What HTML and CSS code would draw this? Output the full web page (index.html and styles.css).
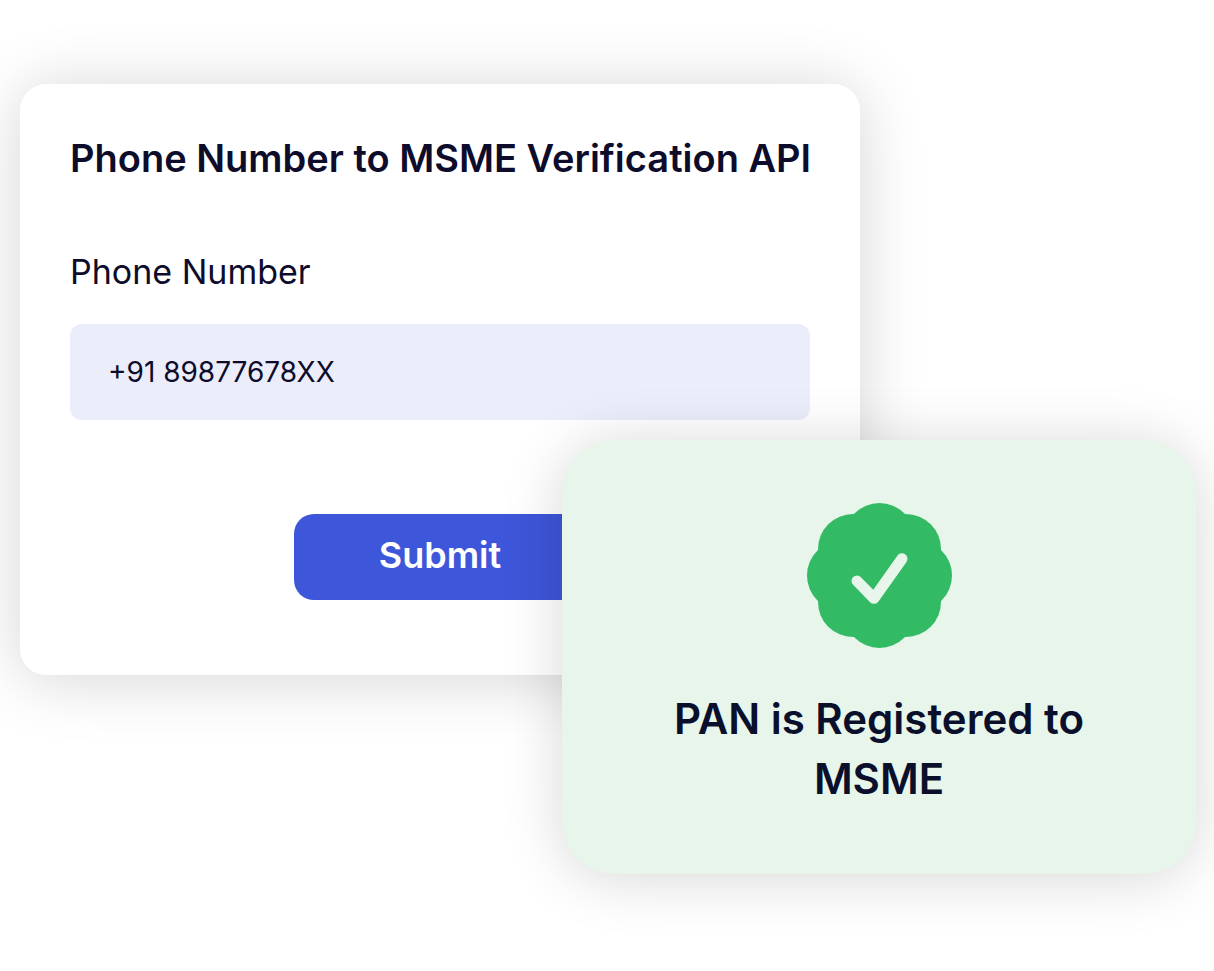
FILE: index.html
```html
<!DOCTYPE html>
<html lang="en">
<head>
<meta charset="utf-8">
<meta name="viewport" content="width=device-width, initial-scale=1">
<title>Phone Number to MSME Verification API</title>
<link rel="stylesheet" href="styles.css">
</head>
<body>
<main class="stage">
  <form class="form-card">
    <h1 class="form-title">Phone Number to MSME Verification API</h1>
    <label class="form-label" for="phone">Phone Number</label>
    <input class="form-input" id="phone" type="tel" value="+91 89877678XX">
    <button class="form-submit" type="button">Submit</button>
  </form>
  <section class="result-card">
    <svg class="badge" viewBox="0 0 145 145" aria-hidden="true">
      <g class="badge-shape">
        <circle cx="72.5" cy="72.5" r="50"/>
        <circle cx="72.5" cy="35" r="35"/>
        <circle cx="99" cy="46" r="35"/>
        <circle cx="110" cy="72.5" r="35"/>
        <circle cx="99" cy="99" r="35"/>
        <circle cx="72.5" cy="110" r="35"/>
        <circle cx="46" cy="99" r="35"/>
        <circle cx="35" cy="72.5" r="35"/>
        <circle cx="46" cy="46" r="35"/>
      </g>
      <path class="badge-tick" d="M50 78 67 95.3 95 55.7"/>
    </svg>
    <p class="result-text">PAN is Registered to MSME</p>
  </section>
</main>
</body>
</html>
```
FILE: styles.css
```css
* {
  box-sizing: border-box;
}

body {
  margin: 0;
  background: #fff;
  color: #0d0c2b;
  font-family: Inter, "Liberation Sans", sans-serif;
  overflow-x: hidden;
}

/* The two cards share one row and overlap in the middle column. */
.stage {
  display: grid;
  grid-template-columns: 542fr 298fr 336fr;
  align-items: start;
  padding: 84px 18px 96px 20px;
}

.form-card {
  grid-area: 1 / 1 / 2 / 3;
  display: flex;
  flex-direction: column;
  padding: 50px 50px 75px;
  border-radius: 26px;
  background: #fff;
  box-shadow: 0 4px 64px rgba(0, 0, 0, 0.17);
}

.form-title {
  margin: 0;
  font-size: 38px;
  font-weight: 600;
  line-height: 48px;
  text-align: center;
  white-space: nowrap;
}

.form-label {
  margin-top: 68px;
  font-size: 34px;
  line-height: 44px;
}

.form-input {
  width: 100%;
  height: 96px;
  margin-top: 30px;
  padding: 0 38px;
  border: 0;
  border-radius: 12px;
  background: #ecedfb;
  color: inherit;
  font-family: inherit;
  font-size: 28px;
}

.form-submit {
  align-self: center;
  width: 292px;
  max-width: 100%;
  margin-top: 94px;
  padding: 19px 0 23px;
  border: 0;
  border-radius: 20px;
  background: #3e56d9;
  color: #fff;
  font-family: inherit;
  font-size: 36px;
  font-weight: 600;
  line-height: 44px;
}

.result-card {
  grid-area: 1 / 2 / 2 / 4;
  display: flex;
  flex-direction: column;
  align-items: center;
  gap: 41px;
  margin-top: 356px;
  padding: 63px 100px 65px;
  border-radius: 52px;
  background: #e7f5ea;
  color: #0a0f2c;
  box-shadow: 0 4px 60px rgba(0, 0, 0, 0.16);
}

.badge {
  width: 145px;
  height: 145px;
}

.badge-shape {
  fill: #32bb64;
}

.badge-tick {
  fill: none;
  stroke: #e7f5ea;
  stroke-width: 11;
  stroke-linecap: round;
  stroke-linejoin: round;
}

.result-text {
  margin: 0;
  font-size: 42px;
  font-weight: 600;
  line-height: 60px;
  text-align: center;
}
```
